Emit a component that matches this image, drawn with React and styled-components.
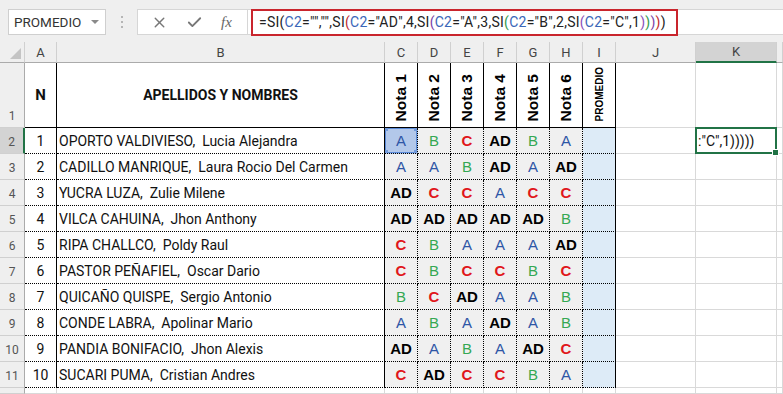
import React from "react";
import styled, { createGlobalStyle, css } from "styled-components";
import { X, Check } from "lucide-react";

const GlobalStyle = createGlobalStyle`
  html, body {
    margin: 0;
    padding: 0;
    background: #ffffff;
    overflow: hidden;
  }
  body {
    font-family: Roboto, "Liberation Sans", sans-serif;
  }
`;

const Page = styled.div`
  width: 783px;
  height: 394px;
  display: flex;
  flex-direction: column;
  overflow: hidden;
`;

/* ---------- formula bar ---------- */

const Toolbar = styled.div`
  height: 42px;
  box-sizing: border-box;
  padding: 9px 0 7px 8px;
  background: #efefef;
  display: flex;
  align-items: stretch;
`;

const NameBox = styled.div`
  width: 98px;
  box-sizing: border-box;
  background: #fff;
  border: 1px solid #cfcfcf;
  display: flex;
  align-items: center;
  justify-content: space-between;
  padding: 0 6px 0 5px;
  font-size: 13.5px;
  color: #333;
`;

const Caret = styled.span`
  width: 0;
  height: 0;
  border-left: 4px solid transparent;
  border-right: 4px solid transparent;
  border-top: 4px solid #8a8a8a;
`;

const Dots = styled.div`
  width: 31px;
  display: flex;
  flex-direction: column;
  align-items: center;
  justify-content: center;
  gap: 3px;
  span {
    width: 2px;
    height: 2px;
    background: #b5b5b5;
  }
`;

const ButtonBox = styled.div`
  width: 110px;
  box-sizing: border-box;
  background: #fff;
  border: 1px solid #d6d6d6;
  border-right: none;
  display: flex;
  align-items: center;
  justify-content: space-around;
  padding: 0 6px 0 4px;
  color: #777;
`;

const Fx = styled.span`
  font-family: "Liberation Serif", serif;
  font-style: italic;
  font-size: 15px;
  color: #666;
`;

const FormulaInput = styled.div`
  flex: 1;
  background: #fff;
  border: 1px solid #d6d6d6;
  border-right: none;
  display: flex;
  align-items: center;
  padding-left: 3px;
`;

const Highlight = styled.div`
  width: 427px;
  height: 27px;
  box-sizing: border-box;
  border: 2px solid #c9252d;
  display: flex;
  align-items: center;
  padding-left: 6px;
  font-size: 14px;
  letter-spacing: 0.25px;
  color: #222;
  white-space: pre;
`;

const PAREN = ["#222", "#c0282d", "#7a3ea6", "#2f9a4c", "#8b4db8"];
const Ref = styled.span`
  color: #3a66b8;
`;
const Paren = styled.span`
  color: ${(p) => PAREN[p.$level]};
`;

/* ---------- sheet ---------- */

const COLS = "25px 32px 328px repeat(7, 33px) 80px 81px 1fr";

const Sheet = styled.div`
  flex: 1;
  display: grid;
  grid-template-columns: ${COLS};
  grid-template-rows: 21px 65px repeat(10, 26px) 1fr;
`;

const ColHead = styled.div`
  box-sizing: border-box;
  background: ${(p) => (p.$active ? "#d3d3d3" : "#efefef")};
  border-right: 1px solid #d0d0d0;
  border-bottom: ${(p) => (p.$active ? "2px solid #217346" : "1px solid #ababab")};
  display: flex;
  align-items: center;
  justify-content: center;
  font-size: 13px;
  color: #444;
`;

const Corner = styled(ColHead)`
  position: relative;
  &::after {
    content: "";
    position: absolute;
    right: 3px;
    bottom: 3px;
    width: 0;
    height: 0;
    border-left: 11px solid transparent;
    border-bottom: 11px solid #c4c4c4;
  }
`;

const RowHead = styled.div`
  box-sizing: border-box;
  background: ${(p) => (p.$active ? "#d3d3d3" : "#efefef")};
  border-right: ${(p) => (p.$active ? "2px solid #217346" : "1px solid #ababab")};
  border-bottom: 1px solid #d0d0d0;
  display: flex;
  align-items: flex-end;
  justify-content: center;
  padding-bottom: 4px;
  font-size: 12px;
  color: #555;
`;

const LINE = {
  grid: "1px solid #d9d9d9",
  solid: "1px solid #000",
  dotted: "1px dotted #000",
};

const Cell = styled.div`
  box-sizing: border-box;
  position: relative;
  border-right: ${(p) => LINE[p.$right || "grid"]};
  border-bottom: ${(p) => LINE[p.$bottom || "grid"]};
  background: ${(p) => p.$bg || "#fff"};
  display: flex;
  align-items: center;
  justify-content: ${(p) => p.$justify || "center"};
  padding-left: ${(p) => (p.$justify === "flex-start" ? "2px" : "0")};
  font-size: 14px;
  color: #111;
  white-space: pre;
  overflow: hidden;
`;

const HeadText = styled.span`
  font-weight: bold;
  font-size: ${(p) => p.$size || 14}px;
`;

const Vertical = styled.div`
  align-self: flex-end;
  margin-bottom: 6px;
  writing-mode: vertical-rl;
  transform: rotate(180deg);
  font-family: "Liberation Sans", Arial, sans-serif;
  font-weight: bold;
  font-size: ${(p) => p.$size}px;
  color: #000;
`;

const GRADE = {
  AD: css`color: #000; font-weight: bold;`,
  A: css`color: #2e56a6; font-weight: normal;`,
  B: css`color: #34a853; font-weight: normal;`,
  C: css`color: #e0161b; font-weight: bold;`,
};

const Grade = styled.span`
  font-family: "Liberation Sans", Arial, sans-serif;
  font-size: 15px;
  ${(p) => GRADE[p.$g]}
`;

const Selection = styled.div`
  position: absolute;
  inset: 0;
  border: 1.5px solid #5b8bd8;
  pointer-events: none;
  span {
    position: absolute;
    width: 5px;
    height: 5px;
    background: #6f98da;
  }
  span:nth-child(1) { left: -3px; top: -3px; }
  span:nth-child(2) { right: -3px; top: -3px; }
  span:nth-child(3) { left: -3px; bottom: -3px; }
  span:nth-child(4) { right: -3px; bottom: -3px; }
`;

const ActiveCell = styled(Cell)`
  overflow: visible;
  &::after {
    content: "";
    position: absolute;
    inset: -1px -1px -1px -1px;
    border: 2px solid #217346;
    pointer-events: none;
  }
`;

const Fill = styled.span`
  position: absolute;
  right: -3px;
  bottom: -3px;
  width: 5px;
  height: 5px;
  background: #217346;
  border: 1px solid #fff;
  z-index: 1;
`;

const students = [
  ["OPORTO VALDIVIESO,  Lucia Alejandra", "A B C AD B A"],
  ["CADILLO MANRIQUE,  Laura Rocio Del Carmen", "A A B AD A AD"],
  ["YUCRA LUZA,  Zulie Milene", "AD C C A C C"],
  ["VILCA CAHUINA,  Jhon Anthony", "AD AD AD AD AD B"],
  ["RIPA CHALLCO,  Poldy Raul", "C B A A A AD"],
  ["PASTOR PEÑAFIEL,  Oscar Dario", "C B C C B C"],
  ["QUICAÑO QUISPE,  Sergio Antonio", "B C AD A A B"],
  ["CONDE LABRA,  Apolinar Mario", "A B A AD A B"],
  ["PANDIA BONIFACIO,  Jhon Alexis", "AD A B A AD C"],
  ["SUCARI PUMA,  Cristian Andres", "C AD C C B A"],
];

const letters = ["", "A", "B", "C", "D", "E", "F", "G", "H", "I", "J", "K", ""];

function Formula() {
  const parts = [];
  let level = 0;
  const src = '=SI(C2="","",SI(C2="AD",4,SI(C2="A",3,SI(C2="B",2,SI(C2="C",1)))))';
  let i = 0;
  let buf = "";
  const flush = () => {
    if (buf) parts.push(buf);
    buf = "";
  };
  while (i < src.length) {
    if (src.startsWith("C2", i) && src[i - 1] === "(") {
      flush();
      parts.push(<Ref key={i}>C2</Ref>);
      i += 2;
    } else if (src[i] === "(") {
      flush();
      parts.push(<Paren key={i} $level={level}>(</Paren>);
      level++;
      i++;
    } else if (src[i] === ")") {
      flush();
      level--;
      parts.push(<Paren key={i} $level={level}>)</Paren>);
      i++;
    } else {
      buf += src[i];
      i++;
    }
  }
  flush();
  return <Highlight>{parts}</Highlight>;
}

export default function App() {
  return (
    <Page>
      <GlobalStyle />
      <Toolbar>
        <NameBox>
          PROMEDIO
          <Caret />
        </NameBox>
        <Dots>
          <span />
          <span />
          <span />
        </Dots>
        <ButtonBox>
          <X size={17} strokeWidth={2} />
          <Check size={17} strokeWidth={2.6} />
          <Fx>fx</Fx>
        </ButtonBox>
        <FormulaInput>
          <Formula />
        </FormulaInput>
      </Toolbar>

      <Sheet>
        {letters.map((l, i) =>
          i === 0 ? (
            <Corner key={i} />
          ) : (
            <ColHead key={i} $active={l === "K"}>
              {l}
            </ColHead>
          )
        )}

        <RowHead>1</RowHead>
        <Cell $right="solid" $bottom="solid">
          <HeadText $size={15}>N</HeadText>
        </Cell>
        <Cell $right="solid" $bottom="solid">
          <HeadText>APELLIDOS Y NOMBRES</HeadText>
        </Cell>
        {[1, 2, 3, 4, 5, 6].map((n) => (
          <Cell key={n} $right="solid" $bottom="solid">
            <Vertical $size={15.5}>Nota {n}</Vertical>
          </Cell>
        ))}
        <Cell $right="solid" $bottom="solid">
          <Vertical $size={10}>PROMEDIO</Vertical>
        </Cell>
        <Cell />
        <Cell />
        <Cell />

        {students.map(([name, grades], r) => {
          const g = grades.split(" ");
          return (
            <React.Fragment key={r}>
              <RowHead $active={r === 0}>{r + 2}</RowHead>
              <Cell $right="solid" $bottom="dotted">
                {r + 1}
              </Cell>
              <Cell $right="solid" $bottom="dotted" $justify="flex-start">
                {name}
              </Cell>
              {g.map((x, c) => (
                <Cell
                  key={c}
                  $right="dotted"
                  $bottom="dotted"
                  $bg={r === 0 && c === 0 ? "#b3c8ea" : "#f0f0f0"}
                >
                  <Grade $g={x}>{x}</Grade>
                  {r === 0 && c === 0 && (
                    <Selection>
                      <span />
                      <span />
                      <span />
                      <span />
                    </Selection>
                  )}
                </Cell>
              ))}
              <Cell $right="solid" $bottom="dotted" $bg="#ddebf7" />
              <Cell />
              {r === 0 ? (
                <ActiveCell $justify="flex-start">
                  :"C",1)))))
                  <Fill />
                </ActiveCell>
              ) : (
                <Cell />
              )}
              <Cell />
            </React.Fragment>
          );
        })}

        <RowHead />
        {Array.from({ length: 12 }).map((_, i) => (
          <Cell key={i} />
        ))}
      </Sheet>
    </Page>
  );
}
